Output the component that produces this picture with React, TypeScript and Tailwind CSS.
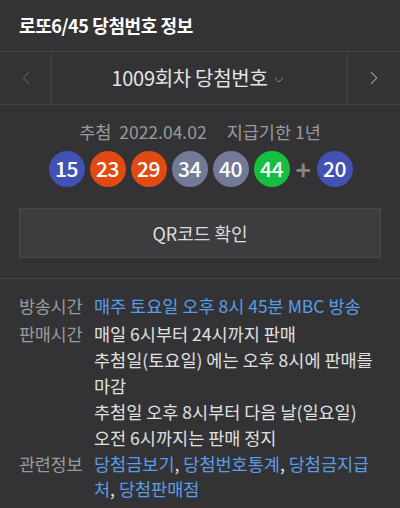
import { ChevronLeft, ChevronRight, ChevronDown } from 'lucide-react';

const balls = [
  { n: 15, c: 'bg-[#4152b2]' },
  { n: 23, c: 'bg-[#e14a12]' },
  { n: 29, c: 'bg-[#e14a12]' },
  { n: 34, c: 'bg-[#737a98]' },
  { n: 40, c: 'bg-[#737a98]' },
  { n: 44, c: 'bg-[#17bf3f]' },
];

function Ball({ n, c }: { n: number; c: string }) {
  return (
    <div className={`w-9 h-9 rounded-full ${c} flex items-center justify-center text-white text-[21px] font-medium tracking-[-0.5px]`}>
      {n}
    </div>
  );
}

export default function App() {
  return (
    <div
      className="w-[400px] h-[508px] overflow-hidden bg-[#333335] text-[#dddddd]"
      style={{ fontFamily: '"Noto Sans CJK KR", "Noto Sans", sans-serif' }}
    >
      <div className="h-[52px] px-[19px] flex items-center border-b border-[#444447]">
        <h1 className="text-[18px] font-bold text-white tracking-[-0.4px]">로또6/45 당첨번호 정보</h1>
      </div>

      <div className="h-[53px] flex border-b border-[#444447]">
        <button className="w-[52px] flex items-center justify-center border-r border-[#444447] text-[#666669]">
          <ChevronLeft size={22} strokeWidth={1.1} />
        </button>
        <div className="flex-1 flex items-center justify-center gap-1 text-[20px] text-[#e4e4e4] tracking-[-0.3px]">
          <span>1009회차 당첨번호</span>
          <ChevronDown size={16} strokeWidth={1.5} className="text-[#8a8a8d] mt-[3px]" />
        </div>
        <button className="w-[53px] flex items-center justify-center border-l border-[#444447] text-[#bbbbbe]">
          <ChevronRight size={22} strokeWidth={1.1} />
        </button>
      </div>

      <div className="pt-[14px] flex justify-center gap-[20px] text-[17.5px] leading-[26px] text-[#9a9a9d]">
        <span>추첨&nbsp; 2022.04.02</span>
        <span>지급기한 1년</span>
      </div>

      <div className="mt-[6px] flex items-center justify-center gap-[5px] pl-[1px]">
        {balls.map((b) => (
          <Ball key={b.n} n={b.n} c={b.c} />
        ))}
        <span className="mx-[1px] text-[#858588] text-[26px] font-bold leading-none w-[15px] text-center">+</span>
        <Ball n={20} c="bg-[#4152b2]" />
      </div>

      <div className="px-[19px] mt-[21px]">
        <button className="w-full h-[50px] bg-[#3d3d40] border border-[#4a4a4d] text-[18px] text-[#dedede]">
          QR코드 확인
        </button>
      </div>

      <div className="mt-[20px] border-t border-[#444447]" />

      <dl className="px-[19px] pt-[14px] text-[17.5px] leading-[26px]">
        <div className="flex">
          <dt className="w-[75px] shrink-0 text-[#9a9a9d] tracking-[-0.3px]">방송시간</dt>
          <dd className="text-[#5a9de6]">매주 토요일 오후 8시 45분 MBC 방송</dd>
        </div>
        <div className="flex mt-[2px]">
          <dt className="w-[75px] shrink-0 text-[#9a9a9d] tracking-[-0.3px]">판매시간</dt>
          <dd className="text-[#e0e0e0]">
            <p>매일 6시부터 24시까지 판매</p>
            <p>
              추첨일(토요일) 에는 오후 8시에 판매를
              <br />
              마감
            </p>
            <p>
              추첨일 오후 8시부터 다음 날(일요일)
              <br />
              오전 6시까지는 판매 정지
            </p>
          </dd>
        </div>
        <div className="flex leading-[25px]">
          <dt className="w-[75px] shrink-0 text-[#9a9a9d] tracking-[-0.3px]">관련정보</dt>
          <dd className="text-[#e0e0e0]">
            <span className="text-[#5a9de6]">당첨금보기</span>,{' '}
            <span className="text-[#5a9de6]">당첨번호통계</span>,{' '}
            <span className="text-[#5a9de6]">
              당첨금지급
              <br />처
            </span>
            , <span className="text-[#5a9de6]">당첨판매점</span>
          </dd>
        </div>
      </dl>
    </div>
  );
}
